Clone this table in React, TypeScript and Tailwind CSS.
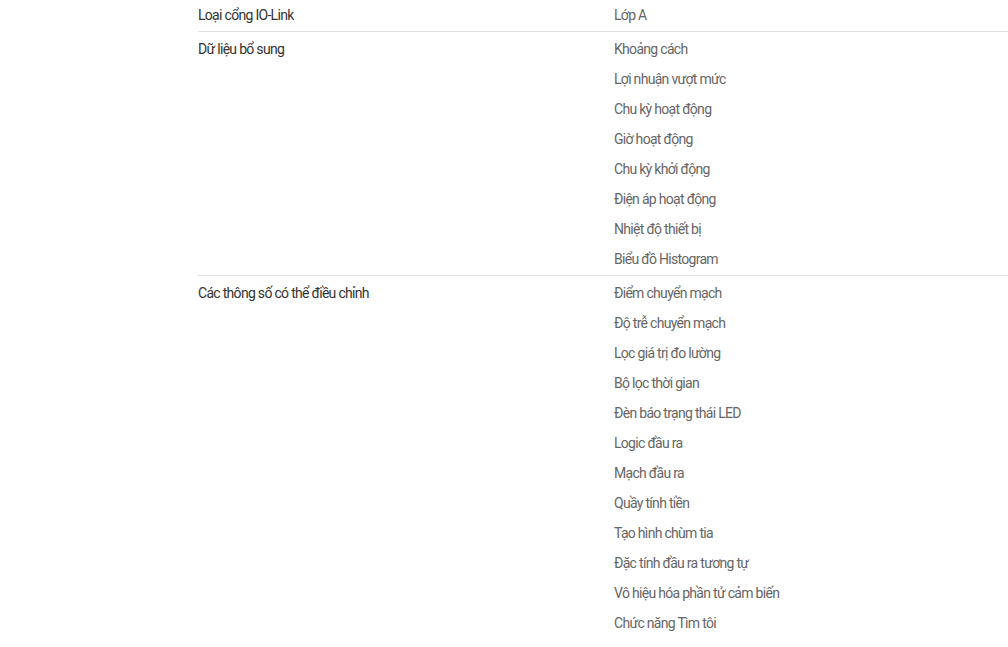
import React from "react";

interface Section {
  label: string;
  values: string[];
}

const sections: Section[] = [
  { label: "Loại cổng IO-Link", values: ["Lớp A"] },
  {
    label: "Dữ liệu bổ sung",
    values: [
      "Khoảng cách",
      "Lợi nhuận vượt mức",
      "Chu kỳ hoạt động",
      "Giờ hoạt động",
      "Chu kỳ khởi động",
      "Điện áp hoạt động",
      "Nhiệt độ thiết bị",
      "Biểu đồ Histogram",
    ],
  },
  {
    label: "Các thông số có thể điều chỉnh",
    values: [
      "Điểm chuyển mạch",
      "Độ trễ chuyển mạch",
      "Lọc giá trị đo lường",
      "Bộ lọc thời gian",
      "Đèn báo trạng thái LED",
      "Logic đầu ra",
      "Mạch đầu ra",
      "Quầy tính tiền",
      "Tạo hình chùm tia",
      "Đặc tính đầu ra tương tự",
      "Vô hiệu hóa phần tử cảm biến",
      "Chức năng Tìm tôi",
    ],
  },
];

export default function App() {
  return (
    <div className="min-h-[647px] w-[1008px] overflow-hidden bg-white font-['Roboto',sans-serif] text-[14px] tracking-[-0.05em]">
      <div className="ml-[198px] -mt-[2px]">
        {sections.map((s, i) => (
          <div
            key={s.label}
            className={`flex pt-[2px] pb-[1px] ${i < sections.length - 1 ? "border-b border-[#e0e0e0]" : ""}`}
          >
            <div className="w-[416px] shrink-0 leading-[30px] text-[#333333]">{s.label}</div>
            <ul className="flex-1">
              {s.values.map(v => (
                <li key={v} className="leading-[30px] text-[#666666]">{v}</li>
              ))}
            </ul>
          </div>
        ))}
      </div>
    </div>
  );
}
